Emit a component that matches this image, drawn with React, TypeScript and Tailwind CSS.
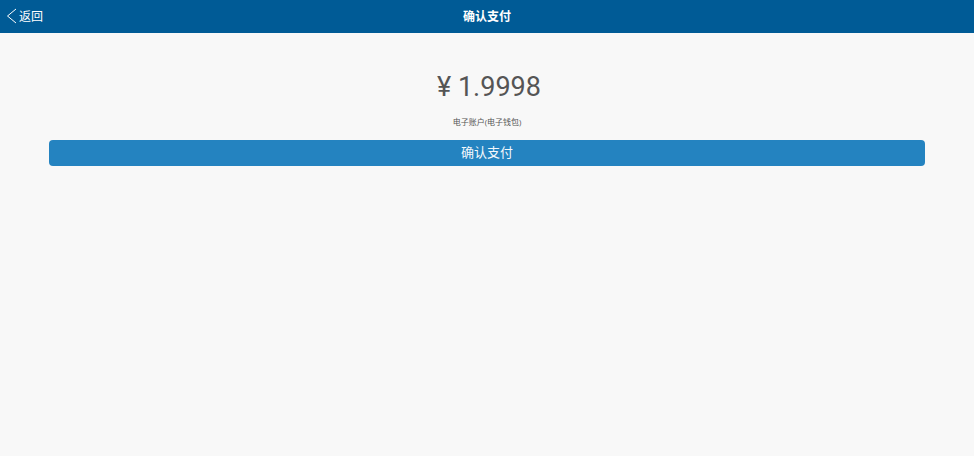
import React from 'react';

const App: React.FC = () => {
  return (
    <div
      className="min-h-screen w-full bg-[#f8f8f8]"
      style={{ fontFamily: '"Open Sans", "Noto Sans CJK SC", sans-serif' }}
    >
      <header className="relative flex h-[33px] items-center justify-center bg-[#005b96] text-white">
        <div className="absolute left-[6px] top-0 flex h-full items-center">
          <svg width="11" height="16" viewBox="0 0 11 16" className="mr-[2px] mb-[1px]">
            <path d="M10 1 L1.5 8 L10 15" fill="none" stroke="#ffffff" strokeWidth="1" />
          </svg>
          <span className="text-[12px]">返回</span>
        </div>
        <h1 className="text-[12px] font-semibold">确认支付</h1>
      </header>

      <main className="flex flex-col items-center px-[49px]">
        <div
          className="mt-[38px] pl-[4px] text-[27px] leading-[32px] text-[#555555]"
          style={{ fontFamily: 'Roboto, "Noto Sans CJK SC", sans-serif' }}
        >
          ¥ 1.9998
        </div>
        <div className="mt-[13px] text-[8px] leading-[12px] text-[#555555]">电子账户(电子钱包)</div>
        <button className="mt-[12px] flex h-[26px] w-full items-center justify-center rounded-[4px] bg-[#2483c0] text-[13px] text-[#f4f8fc]">
          确认支付
        </button>
      </main>
    </div>
  );
};

export default App;
